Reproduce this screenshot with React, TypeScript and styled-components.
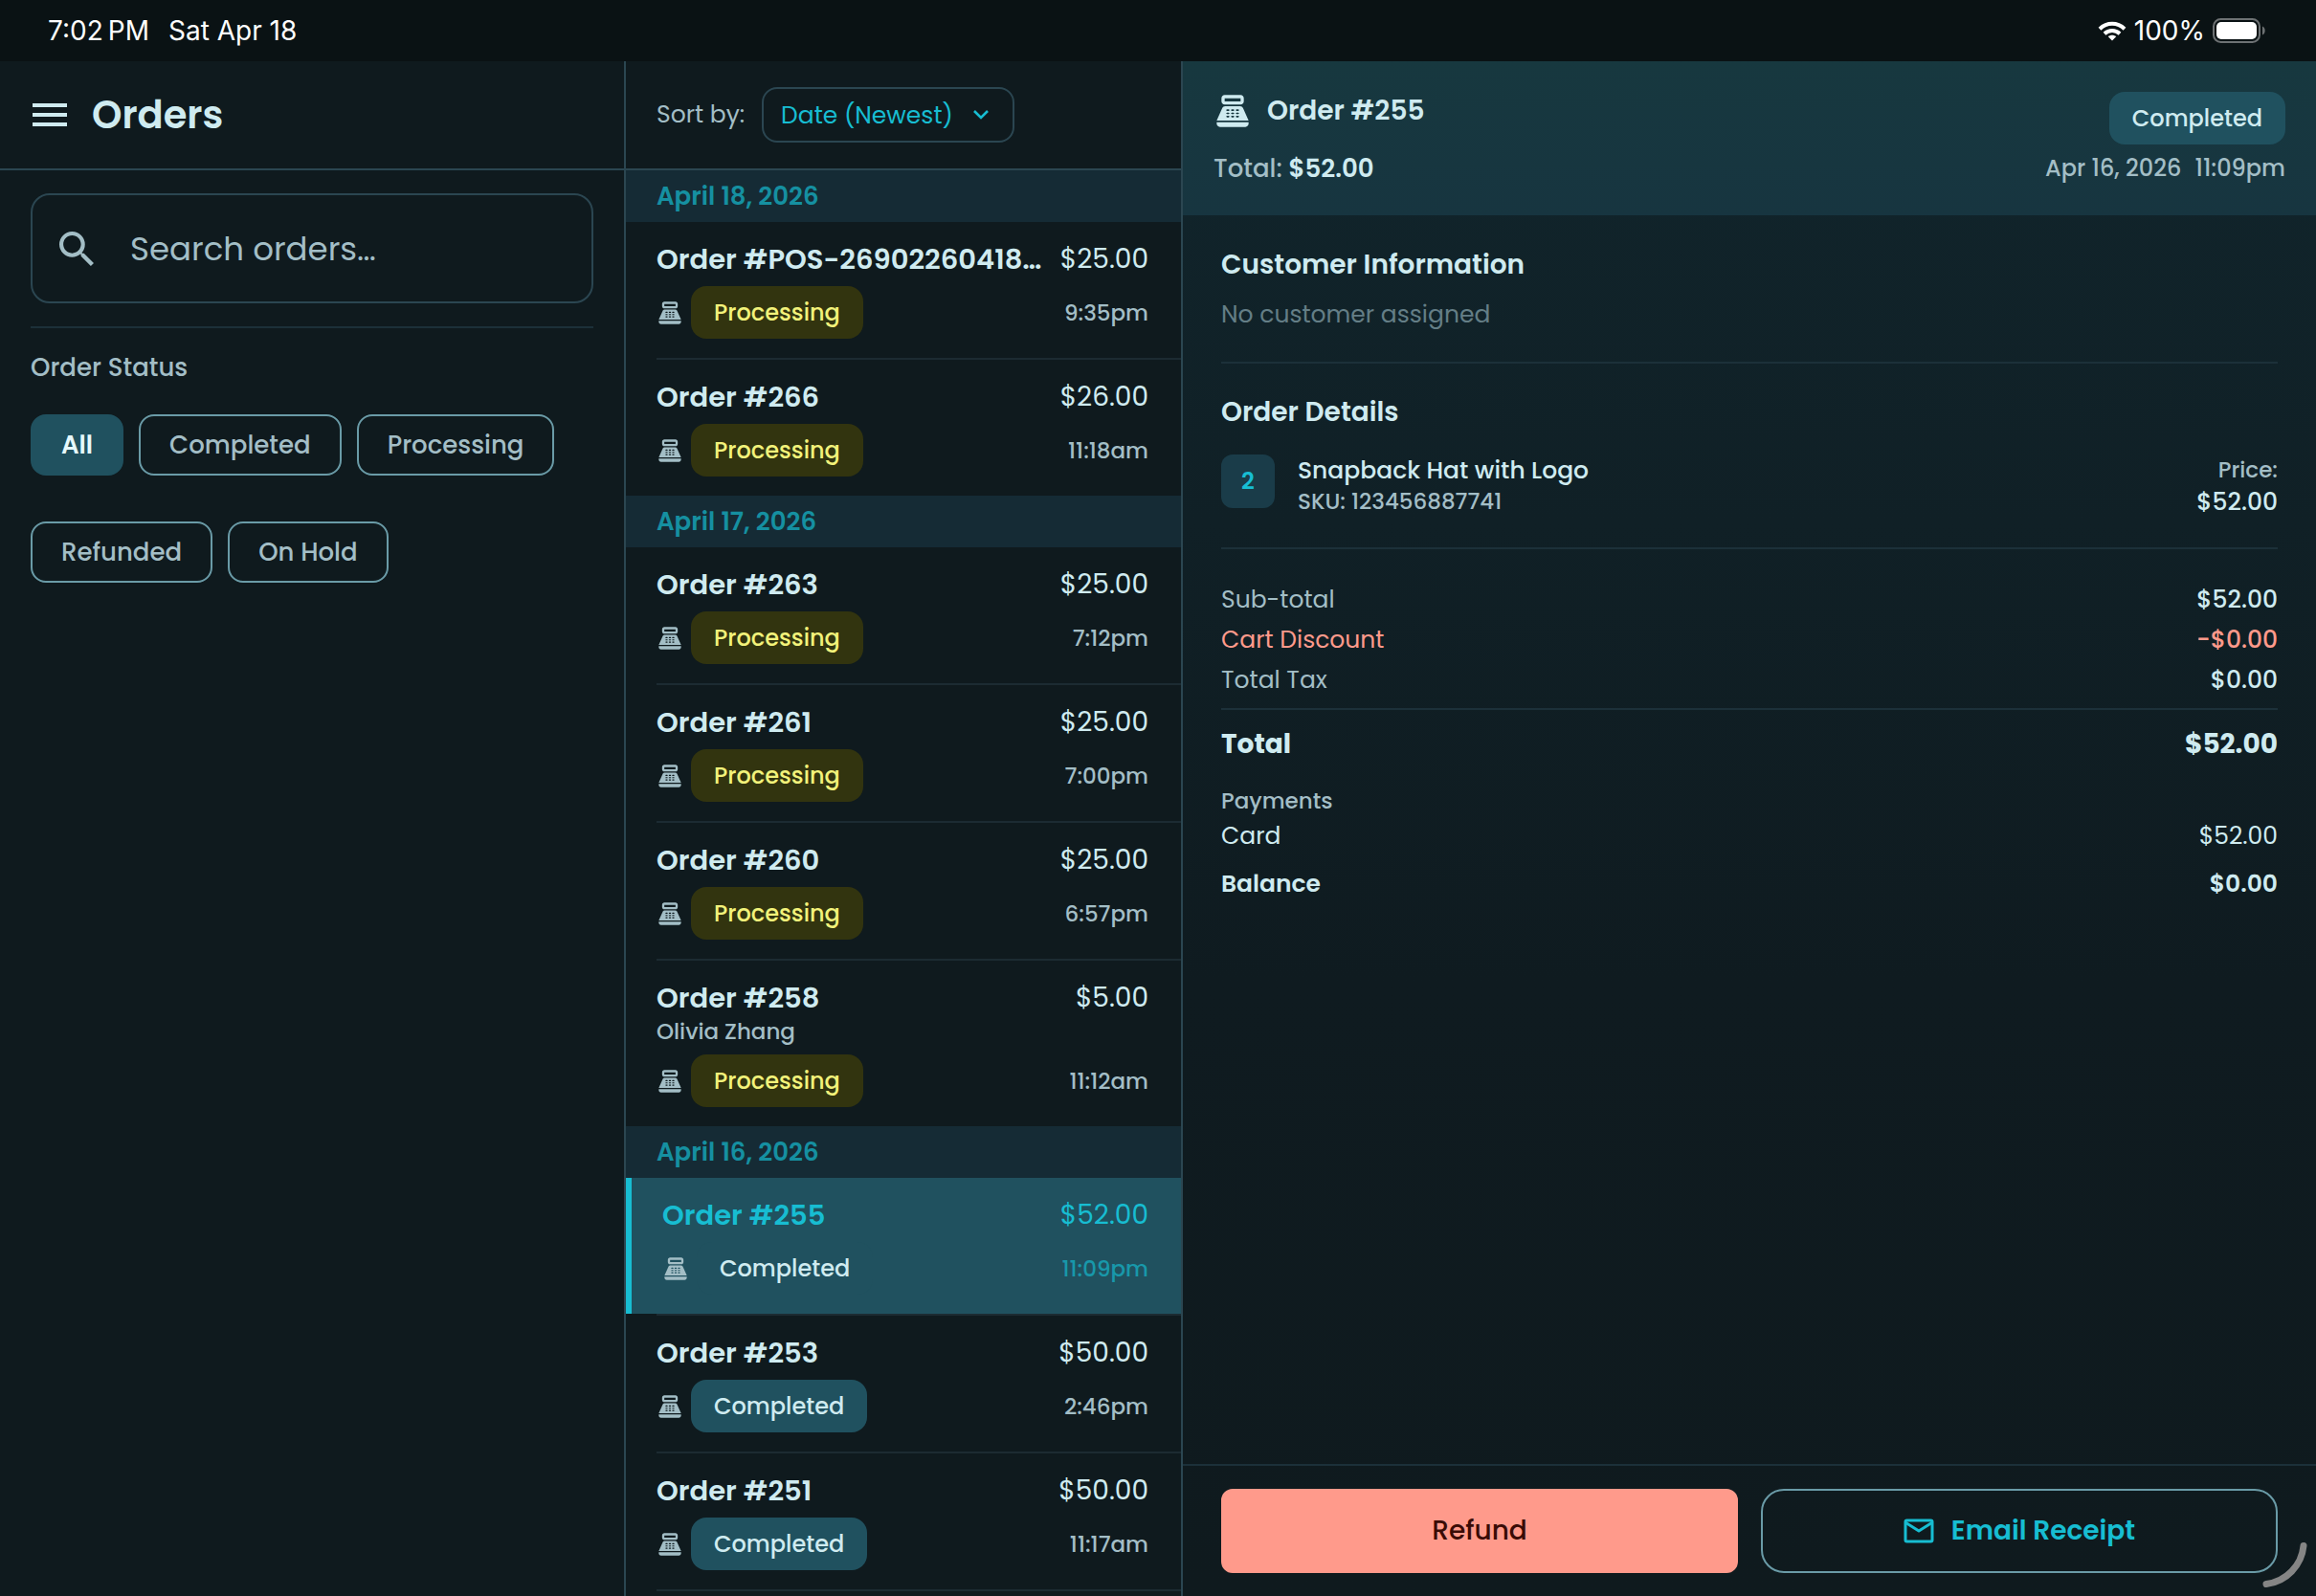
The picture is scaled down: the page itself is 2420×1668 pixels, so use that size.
import React from "react";
import styled, { createGlobalStyle } from "styled-components";

const GlobalStyle = createGlobalStyle`
  *, *::before, *::after { box-sizing: border-box; }
  body { margin: 0; background: #0f1a1e; }
  body, button, input, select {
    font-family: Poppins, Inter, "Noto Sans", sans-serif;
  }
  h1, h2, h3, p, ul, dl, dd { margin: 0; padding: 0; font-weight: inherit; }
  ul { list-style: none; }
  svg { display: block; flex: none; }
`;

const c = {
  text: "#cfebf0",
  muted: "#a3bec6",
  faint: "#647e86",
  accent: "#17bdd2",
  teal: "#1590a1",
  fill: "#20515f",
  line: "#2b4651",
  softLine: "#1c3039",
  outline: "#6a9ba7",
  danger: "#ff9a8b",
};

const Screen = styled.div`
  display: flex;
  flex-direction: column;
  height: 100vh;
  overflow: hidden;
  color: ${c.text};
`;

const StatusBar = styled.header`
  display: flex;
  align-items: center;
  justify-content: space-between;
  flex: none;
  height: 64px;
  padding: 0 52px 0 50px;
  background: #0a1214;
  color: #fff;
  font-family: Inter, sans-serif;
  font-size: 28px;
`;

const StatusGroup = styled.div<{ $gap: number }>`
  display: flex;
  align-items: center;
  gap: ${(p) => p.$gap}px;
`;

const Columns = styled.main`
  display: grid;
  grid-template-columns: 654px 582px minmax(0, 1fr);
  flex: 1;
  min-height: 0;
`;

const Panel = styled.section`
  display: flex;
  flex-direction: column;
  min-width: 0;
  min-height: 0;
  overflow: hidden;
  border-right: 2px solid ${c.line};
`;

const PanelHeader = styled.div<{ $gap: number }>`
  display: flex;
  align-items: center;
  gap: ${(p) => p.$gap}px;
  flex: none;
  height: 114px;
  padding: 0 32px;
  border-bottom: 2px solid ${c.line};
`;

const MenuButton = styled.button`
  display: flex;
  padding: 0;
  border: 0;
  background: none;
  color: ${c.text};
`;

const PageTitle = styled.h1`
  font-size: 40px;
  font-weight: 600;
  line-height: 60px;
`;

const Filters = styled.div`
  display: flex;
  flex-direction: column;
  padding: 24px 32px;
`;

const SearchBox = styled.label`
  display: flex;
  align-items: center;
  gap: 38px;
  height: 115px;
  padding: 0 28px;
  border: 2px solid ${c.line};
  border-radius: 20px;
  color: ${c.muted};
`;

const SearchInput = styled.input`
  flex: 1;
  min-width: 0;
  padding: 0;
  border: 0;
  outline: 0;
  background: none;
  color: ${c.text};
  font-size: 34px;
  line-height: 48px;
  &::placeholder { color: ${c.muted}; opacity: 1; }
`;

const FilterTitle = styled.h2`
  margin-top: 24px;
  padding: 23px 0 31px;
  border-top: 2px solid ${c.softLine};
  color: ${c.muted};
  font-size: 26px;
  font-weight: 500;
  line-height: 36px;
`;

const Chips = styled.div`
  display: flex;
  flex-wrap: wrap;
  gap: 48px 16px;
`;

const Chip = styled.button<{ $active?: boolean }>`
  height: 64px;
  padding: 0 30px;
  border: 2px solid ${(p) => (p.$active ? c.fill : c.outline)};
  border-radius: 16px;
  background: ${(p) => (p.$active ? c.fill : "transparent")};
  color: ${(p) => (p.$active ? "#e6f8fb" : c.muted)};
  font-size: 26px;
  font-weight: ${(p) => (p.$active ? 600 : 500)};
`;

const SortLabel = styled.label`
  color: ${c.muted};
  font-size: 25px;
`;

const SortField = styled.div`
  display: grid;
  align-items: center;
  & > * { grid-area: 1 / 1; }
  & > svg { justify-self: end; margin-right: 26px; pointer-events: none; }
`;

const SortSelect = styled.select`
  appearance: none;
  height: 58px;
  padding: 0 62px 0 18px;
  border: 2px solid ${c.line};
  border-radius: 16px;
  background: transparent;
  color: ${c.accent};
  font-size: 25px;
`;

const OrderList = styled.div`
  flex: 1;
  min-height: 0;
  overflow: hidden;
`;

const DateHeading = styled.h2`
  height: 54px;
  padding: 0 32px;
  background: #152b35;
  color: ${c.teal};
  font-size: 26px;
  font-weight: 600;
  line-height: 54px;
`;

const OrderItem = styled.li<{ $divider: boolean }>`
  &::after {
    content: "";
    display: ${(p) => (p.$divider ? "block" : "none")};
    height: 2px;
    margin-left: 32px;
    background: #1c2b32;
  }
`;

const OrderRow = styled.button<{ $selected?: boolean }>`
  display: flex;
  flex-direction: column;
  width: 100%;
  padding: 19px 34px 20px 32px;
  border: 0;
  border-left: ${(p) => (p.$selected ? `6px solid ${c.accent}` : "0")};
  background: ${(p) => (p.$selected ? c.fill : "transparent")};
  color: ${(p) => (p.$selected ? c.accent : c.text)};
  text-align: left;
`;

const Line = styled.span`
  display: flex;
  align-items: center;
  justify-content: space-between;
  gap: 16px;
  width: 100%;
`;

const OrderName = styled.span`
  overflow: hidden;
  min-width: 0;
  font-size: 29px;
  font-weight: 600;
  line-height: 40px;
  text-overflow: ellipsis;
  white-space: nowrap;
`;

const OrderAmount = styled.span`
  flex: none;
  font-size: 28px;
  line-height: 40px;
`;

const CustomerName = styled.span`
  color: ${c.muted};
  font-size: 23px;
  font-weight: 500;
  line-height: 31px;
`;

const BadgeLine = styled(Line)`
  margin-top: 8px;
  color: ${c.muted};
`;

const BadgeGroup = styled.span`
  display: flex;
  align-items: center;
  gap: 8px;
`;

const Badge = styled.span<{ $tone: string }>`
  padding: 0 24px;
  border-radius: 16px;
  background: ${(p) => (p.$tone === "Processing" ? "#32340f" : c.fill)};
  color: ${(p) => (p.$tone === "Processing" ? "#f2f27a" : c.text)};
  font-size: 24px;
  font-weight: 500;
  line-height: 55px;
`;

const Time = styled.span<{ $selected?: boolean }>`
  color: ${(p) => (p.$selected ? "#1898aa" : c.muted)};
  font-size: 23px;
  font-weight: 500;
`;

const Detail = styled.section`
  display: flex;
  flex-direction: column;
  min-width: 0;
  min-height: 0;
  background: linear-gradient(180deg, #11252c 0%, #0f1b20 60%, #0f1a1e 100%);
`;

const DetailHeader = styled.div`
  display: flex;
  justify-content: space-between;
  flex: none;
  height: 161px;
  padding: 32px;
  background: linear-gradient(180deg, #17383f 0%, #173540 100%);
`;

const HeaderSide = styled.div<{ $end?: boolean }>`
  display: flex;
  flex-direction: column;
  align-items: ${(p) => (p.$end ? "flex-end" : "flex-start")};
`;

const OrderTitle = styled.h2`
  display: flex;
  align-items: center;
  gap: 16px;
  font-size: 28px;
  font-weight: 600;
  line-height: 40px;
`;

const HeaderTotal = styled.p`
  margin-top: 20px;
  color: ${c.muted};
  font-size: 26px;
  font-weight: 500;
  line-height: 40px;
  strong { color: ${c.text}; font-weight: 600; }
`;

const HeaderDate = styled.p`
  display: flex;
  gap: 14px;
  color: ${c.muted};
  font-size: 24px;
  font-weight: 500;
  line-height: 50px;
`;

const DetailBody = styled.div`
  flex: 1;
  min-height: 0;
  padding: 0 40px;
  overflow: hidden;
`;

const Block = styled.section<{ $top: number; $bottom: number; $last?: boolean }>`
  padding: ${(p) => p.$top}px 0 ${(p) => p.$bottom}px;
  border-bottom: ${(p) => (p.$last ? "0" : `2px solid ${c.softLine}`)};
`;

const SectionTitle = styled.h3`
  font-size: 28px;
  font-weight: 600;
  line-height: 40px;
`;

const EmptyNote = styled.p`
  margin-top: 12px;
  color: ${c.faint};
  font-size: 25px;
  line-height: 40px;
`;

const LineItem = styled.div`
  display: flex;
  gap: 24px;
  margin-top: 24px;
`;

const Quantity = styled.span`
  flex: none;
  width: 56px;
  height: 56px;
  border-radius: 12px;
  background: #1a3c49;
  color: ${c.accent};
  font-size: 24px;
  font-weight: 600;
  line-height: 56px;
  text-align: center;
`;

const ItemText = styled.div<{ $end?: boolean }>`
  flex: ${(p) => (p.$end ? "none" : "1")};
  text-align: ${(p) => (p.$end ? "right" : "left")};
  line-height: 33px;
`;

const Strong = styled.p`
  font-size: 25px;
  font-weight: 500;
`;

const Small = styled.p`
  color: ${c.muted};
  font-size: 23px;
  font-weight: 500;
`;

const Sums = styled.dl`
  display: flex;
  flex-direction: column;
  margin: 0;
`;

const Sum = styled.div<{ $kind?: "danger" | "total" | "plain" | "strong"; $height: number }>`
  display: flex;
  align-items: center;
  justify-content: space-between;
  height: ${(p) => p.$height}px;
  color: ${(p) => (p.$kind === "danger" ? c.danger : c.text)};
  font-size: ${(p) => (p.$kind === "total" ? 28 : 25)}px;
  font-weight: ${(p) => (p.$kind === "total" ? 700 : p.$kind === "strong" ? 600 : 400)};
  dt { color: ${(p) => (p.$kind ? "inherit" : c.muted)}; }
  dd { font-weight: ${(p) => (p.$kind && p.$kind !== "danger" ? "inherit" : 500)}; }
`;

const PaymentsTitle = styled.h3`
  margin-top: 20px;
  color: ${c.muted};
  font-size: 23px;
  font-weight: 500;
  line-height: 36px;
`;

const Actions = styled.footer`
  display: flex;
  flex: none;
  gap: 24px;
  padding: 24px 40px;
  border-top: 2px solid ${c.softLine};
`;

const Action = styled.button<{ $filled?: boolean }>`
  display: flex;
  flex: 1 1 0;
  align-items: center;
  justify-content: center;
  gap: 18px;
  height: 88px;
  border: 2px solid ${(p) => (p.$filled ? c.danger : c.outline)};
  border-radius: ${(p) => (p.$filled ? 12 : 24)}px;
  background: ${(p) => (p.$filled ? c.danger : "transparent")};
  color: ${(p) => (p.$filled ? "#3a0b06" : c.accent)};
  font-size: 28px;
  font-weight: ${(p) => (p.$filled ? 500 : 600)};
`;

const CornerHandle = styled.svg`
  position: fixed;
  right: 4px;
  bottom: 4px;
`;

const RegisterIcon = ({ size }: { size: number }) => (
  <svg width={size} height={size} viewBox="0 0 24 24" fill="currentColor" aria-hidden="true">
    <path
      fillRule="evenodd"
      d="M17 2H7c-1.100 0-2 .9-2 2v2c0 1.100.9 2 2 2h10c1.100 0 2-.9 2-2V4c0-1.100-.9-2-2-2zm0 4H7V4h10v2zm3 16H4c-1.100 0-2-.9-2-2v-1h20v1c0 1.100-.9 2-2 2zM18.530 10.190C18.210 9.470 17.490 9 16.700 9H7.300c-.79 0-1.510.47-1.830 1.190L2 18h20l-3.470-7.810zM9.500 16h-1c-.28 0-.5-.22-.5-.5s.22-.5.5-.5h1c.28 0 .5.220.5.5s-.22.5-.5.5zm0-2h-1c-.28 0-.5-.22-.5-.5s.22-.5.5-.5h1c.28 0 .5.220.5.5s-.22.5-.5.5zm0-2h-1c-.28 0-.5-.22-.5-.5s.22-.5.5-.5h1c.28 0 .5.220.5.5s-.22.5-.5.5zm3 4h-1c-.28 0-.5-.22-.5-.5s.22-.5.5-.5h1c.28 0 .5.220.5.5s-.22.5-.5.5zm0-2h-1c-.28 0-.5-.22-.5-.5s.22-.5.5-.5h1c.28 0 .5.220.5.5s-.22.5-.5.5zm0-2h-1c-.28 0-.5-.22-.5-.5s.22-.5.5-.5h1c.28 0 .5.220.5.5s-.22.5-.5.5zm3 4h-1c-.28 0-.5-.22-.5-.5s.22-.5.5-.5h1c.28 0 .5.220.5.5s-.22.5-.5.5zm0-2h-1c-.28 0-.5-.22-.5-.5s.22-.5.5-.5h1c.28 0 .5.220.5.5s-.22.5-.5.5zm0-2h-1c-.28 0-.5-.22-.5-.5s.22-.5.5-.5h1c.28 0 .5.220.5.5s-.22.5-.5.5z"
    />
  </svg>
);

type Order = {
  id: string;
  amount: string;
  status: string;
  time: string;
  customer?: string;
  selected?: boolean;
};

const groups: { date: string; orders: Order[]; continues?: boolean }[] = [
  {
    date: "April 18, 2026",
    orders: [
      { id: "POS-26902260418…", amount: "$25.00", status: "Processing", time: "9:35pm" },
      { id: "266", amount: "$26.00", status: "Processing", time: "11:18am" },
    ],
  },
  {
    date: "April 17, 2026",
    orders: [
      { id: "263", amount: "$25.00", status: "Processing", time: "7:12pm" },
      { id: "261", amount: "$25.00", status: "Processing", time: "7:00pm" },
      { id: "260", amount: "$25.00", status: "Processing", time: "6:57pm" },
      { id: "258", amount: "$5.00", status: "Processing", time: "11:12am", customer: "Olivia Zhang" },
    ],
  },
  {
    date: "April 16, 2026",
    continues: true,
    orders: [
      { id: "255", amount: "$52.00", status: "Completed", time: "11:09pm", selected: true },
      { id: "253", amount: "$50.00", status: "Completed", time: "2:46pm" },
      { id: "251", amount: "$50.00", status: "Completed", time: "11:17am" },
    ],
  },
];

const statuses = ["All", "Completed", "Processing", "Refunded", "On Hold"];

export default function App() {
  return (
    <Screen>
      <GlobalStyle />
      <StatusBar>
        <StatusGroup $gap={20}>
          <span>7:02{"\u2009"}PM</span>
          <span>Sat Apr 18</span>
        </StatusGroup>
        <StatusGroup $gap={8}>
          <svg width="30" height="21" viewBox="0 0 30 21" fill="none" stroke="#fff" strokeWidth="4" aria-hidden="true">
            <path d="M2 8.200C9.500 1 20.500 1 28 8.200" />
            <path d="M7 13.200c4.600-4.300 11.400-4.300 16 0" />
            <path d="M15 20.500l-4.200-4.300c2.400-2 6-2 8.400 0z" fill="#fff" stroke="none" />
          </svg>
          <span>100%</span>
          <svg width="56" height="26" viewBox="0 0 56 26" aria-hidden="true">
            <rect x="1" y="1" width="48" height="24" rx="7.500" fill="none" stroke="#6d7173" strokeWidth="2" />
            <rect x="4" y="4" width="42" height="18" rx="5" fill="#fff" />
            <path d="M52 8.500c3.600 1.500 3.600 7.500 0 9z" fill="#6d7173" />
          </svg>
        </StatusGroup>
      </StatusBar>

      <Columns>
        <Panel>
          <PanelHeader $gap={24}>
            <MenuButton aria-label="Menu">
              <svg width="40" height="24" viewBox="0 0 40 24" fill="currentColor">
                <path d="M2 0h36v4H2zM2 10h36v4H2zM2 20h36v4H2z" />
              </svg>
            </MenuButton>
            <PageTitle>Orders</PageTitle>
          </PanelHeader>
          <Filters>
            <SearchBox>
              <svg width="36" height="36" viewBox="3 3 17.500 17.500" fill="currentColor" aria-hidden="true">
                <path d="M15.500 14h-.79l-.28-.27A6.471 6.471 0 0 0 16 9.500 6.500 6.500 0 1 0 9.500 16c1.610 0 3.090-.59 4.230-1.570l.27.28v.79l5 4.990L20.490 19l-4.990-5zm-6 0C7.010 14 5 11.990 5 9.500S7.010 5 9.500 5 14 7.010 14 9.500 11.990 14 9.500 14z" />
              </svg>
              <SearchInput type="text" placeholder="Search orders…" aria-label="Search orders" />
            </SearchBox>
            <FilterTitle>Order Status</FilterTitle>
            <Chips>
              {statuses.map((s) => (
                <Chip key={s} $active={s === "All"}>{s}</Chip>
              ))}
            </Chips>
          </Filters>
        </Panel>

        <Panel>
          <PanelHeader $gap={18}>
            <SortLabel htmlFor="sort">Sort by:</SortLabel>
            <SortField>
              <SortSelect id="sort" defaultValue="newest">
                <option value="newest">Date (Newest)</option>
              </SortSelect>
              <svg width="18" height="12" viewBox="0 0 18 12" fill="none" stroke={c.accent} strokeWidth="2.600" aria-hidden="true">
                <path d="M2 2l7 7 7-7" />
              </svg>
            </SortField>
          </PanelHeader>
          <OrderList>
            {groups.map((g) => (
              <React.Fragment key={g.date}>
                <DateHeading>{g.date}</DateHeading>
                <ul>
                  {g.orders.map((o, i) => (
                    <OrderItem key={o.id} $divider={g.continues || i < g.orders.length - 1}>
                      <OrderRow $selected={o.selected}>
                        <Line>
                          <OrderName>Order #{o.id}</OrderName>
                          <OrderAmount>{o.amount}</OrderAmount>
                        </Line>
                        {o.customer && <CustomerName>{o.customer}</CustomerName>}
                        <BadgeLine>
                          <BadgeGroup>
                            <RegisterIcon size={28} />
                            <Badge $tone={o.status}>{o.status}</Badge>
                          </BadgeGroup>
                          <Time $selected={o.selected}>{o.time}</Time>
                        </BadgeLine>
                      </OrderRow>
                    </OrderItem>
                  ))}
                </ul>
              </React.Fragment>
            ))}
          </OrderList>
        </Panel>

        <Detail>
          <DetailHeader>
            <HeaderSide>
              <OrderTitle>
                <RegisterIcon size={40} />
                Order #255
              </OrderTitle>
              <HeaderTotal>
                Total: <strong>$52.00</strong>
              </HeaderTotal>
            </HeaderSide>
            <HeaderSide $end>
              <Badge $tone="Completed">Completed</Badge>
              <HeaderDate>
                <span>Apr 16, 2026</span>
                <span>11:09pm</span>
              </HeaderDate>
            </HeaderSide>
          </DetailHeader>

          <DetailBody>
            <Block $top={32} $bottom={29}>
              <SectionTitle>Customer Information</SectionTitle>
              <EmptyNote>No customer assigned</EmptyNote>
            </Block>
            <Block $top={31} $bottom={31}>
              <SectionTitle>Order Details</SectionTitle>
              <LineItem>
                <Quantity>2</Quantity>
                <ItemText>
                  <Strong>Snapback Hat with Logo</Strong>
                  <Small>SKU: 123456887741</Small>
                </ItemText>
                <ItemText $end>
                  <Small>Price:</Small>
                  <Strong>$52.00</Strong>
                </ItemText>
              </LineItem>
            </Block>
            <Block $top={32} $bottom={8}>
              <Sums>
                <Sum $height={42}><dt>Sub-total</dt><dd>$52.00</dd></Sum>
                <Sum $height={42} $kind="danger"><dt>Cart Discount</dt><dd>-$0.00</dd></Sum>
                <Sum $height={42}><dt>Total Tax</dt><dd>$0.00</dd></Sum>
              </Sums>
            </Block>
            <Block $top={15} $bottom={0} $last>
              <Sums>
                <Sum $height={42} $kind="total"><dt>Total</dt><dd>$52.00</dd></Sum>
              </Sums>
              <PaymentsTitle>Payments</PaymentsTitle>
              <Sums>
                <Sum $height={38} $kind="plain"><dt>Card</dt><dd>$52.00</dd></Sum>
                <Sum $height={62} $kind="strong"><dt>Balance</dt><dd>$0.00</dd></Sum>
              </Sums>
            </Block>
          </DetailBody>

          <Actions>
            <Action $filled>Refund</Action>
            <Action>
              <svg width="32" height="26" viewBox="0 0 32 26" fill="none" stroke="currentColor" strokeWidth="3" strokeLinejoin="round" aria-hidden="true">
                <rect x="2" y="2" width="28" height="22" rx="1.500" />
                <path d="M2.500 4.500L16 13l13.500-8.500" />
              </svg>
              Email Receipt
            </Action>
          </Actions>
        </Detail>
      </Columns>

      <CornerHandle width="56" height="56" viewBox="0 0 56 56" fill="none" stroke="#858585" strokeWidth="7" strokeLinecap="round" aria-hidden="true">
        <path d="M47 7.500C45 28 29 45 8 47.500" />
      </CornerHandle>
    </Screen>
  );
}
